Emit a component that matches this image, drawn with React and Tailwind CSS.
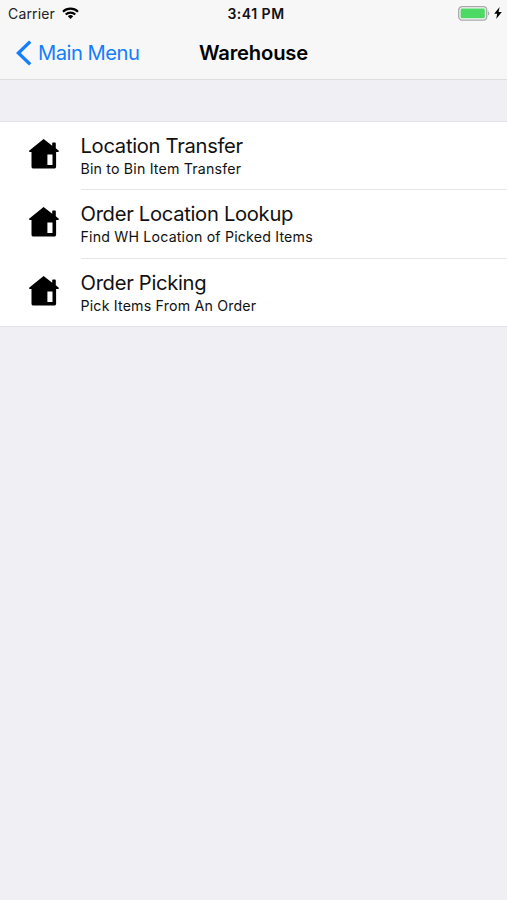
import React from "react";

const menuItems = [
  {
    title: "Location Transfer",
    subtitle: "Bin to Bin Item Transfer",
  },
  {
    title: "Order Location Lookup",
    subtitle: "Find WH Location of Picked Items",
  },
  {
    title: "Order Picking",
    subtitle: "Pick Items From An Order",
  },
];

const WifiIcon = () => (
  <svg className="w-[17px] h-3" viewBox="0 0 17 12" fill="none" stroke="#000" strokeWidth="2.1">
    <path d="M1 4.7a10.8 10.8 0 0 1 15 0" />
    <path d="M3.7 7.5a7 7 0 0 1 9.6 0" />
    <path d="M8.5 11.9 5.8 9.2a4 4 0 0 1 5.4 0Z" fill="#000" stroke="none" />
  </svg>
);

const BatteryIcon = () => (
  <svg className="w-8 h-[15px]" viewBox="0 0 32 15" fill="none">
    <rect x="0.7" y="0.7" width="28" height="13.4" rx="3.4" stroke="#a9a9ab" strokeWidth="1.3" />
    <rect x="2.6" y="2.6" width="24.2" height="9.6" rx="1.3" fill="#4cd964" />
    <path d="M30 5.2c1.8.7 1.8 3.6 0 4.3Z" fill="#a9a9ab" />
  </svg>
);

const BoltIcon = () => (
  <svg className="w-2 h-3" viewBox="0 0 8 12">
    <path d="M5.6 0 0.2 6.8h3L2.2 12 7.8 4.9H4.6Z" fill="#000" />
  </svg>
);

const HouseIcon = () => (
  <svg className="w-[30px] h-[30px] shrink-0" viewBox="0 0 30 30">
    <path
      fillRule="evenodd"
      d="M14.6 0 .4 11.4c-.6.6-.4 1.5.5 1.5h1.6v14.8c0 1.1.8 1.9 1.9 1.9h20.9c1.1 0 1.8-.8 1.8-1.9V12.9h2c.8 0 1-.8.4-1.4l-2.7-2.3V4.4c0-.6-.3-.9-.8-.9h-2c-.5 0-.8.3-.8.9v2.3ZM18.4 15.6h5.1v10.5h-5.1Z"
    />
  </svg>
);

const App = () => {
  return (
    <div className="min-h-screen bg-[#efeff4] text-black font-['Inter','Liberation_Sans',sans-serif]">
      <header className="h-20 bg-[#f7f7f8] border-b border-[#dedee0]">
        {/* Status bar */}
        <div className="grid grid-cols-3 items-center h-[26px] pl-2 pr-[5px]">
          <div className="flex items-center gap-[7px]">
            <span className="text-[14px] tracking-[0.15px] text-[#222]">Carrier</span>
            <WifiIcon />
          </div>
          <span className="text-[14px] font-semibold tracking-[0.5px] text-center text-[#111] pl-[2px]">
            3:41 PM
          </span>
          <div className="flex items-center justify-end gap-1">
            <BatteryIcon />
            <BoltIcon />
          </div>
        </div>

        {/* Navigation bar */}
        <nav className="grid grid-cols-3 items-center h-[54px] px-4">
          <a href="#" className="flex items-center gap-[6px] text-[#147efb] whitespace-nowrap">
            <svg className="w-4 h-[26px] shrink-0" viewBox="0 0 16 26" fill="none">
              <path d="M14.2 1.6 2.4 13l11.8 11.4" stroke="currentColor" strokeWidth="3.4" />
            </svg>
            <span className="text-[20.2px] tracking-[-0.5px]">Main Menu</span>
          </a>
          <h1 className="text-[20.2px] tracking-[-0.18px] font-semibold text-center">Warehouse</h1>
        </nav>
      </header>

      {/* Menu list */}
      <ul className="mt-[41px] bg-white border-y border-[#e4e4e8]">
        {menuItems.map((item) => (
          <li key={item.title} className="group flex h-[68.4px] last:h-[67.2px] pl-[29px]">
            <div className="w-[51.5px] pt-[17px]">
              <HouseIcon />
            </div>
            <div className="flex-1 pt-[11px] border-b border-[#e6e6e8] group-last:border-b-0">
              <p className="text-[20.2px] leading-[26px] tracking-[-0.3px] text-[#111]">{item.title}</p>
              <p className="text-[14.2px] leading-5 tracking-[0.18px] text-[#111]">{item.subtitle}</p>
            </div>
          </li>
        ))}
      </ul>
    </div>
  );
};

export default App;
